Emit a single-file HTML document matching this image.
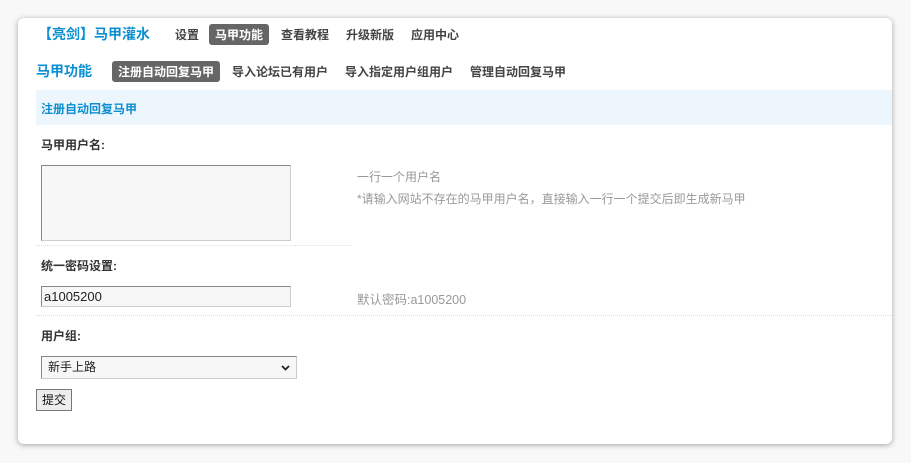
<!DOCTYPE html>
<html><head><meta charset="utf-8"><style>
body{margin:0;width:911px;height:463px;background:#f8f8f8;font-family:"Liberation Sans","Noto Sans CJK SC",sans-serif;position:relative;overflow:hidden}
.card{position:absolute;left:18px;top:18px;width:874px;height:426px;background:#fff;border-radius:6px;box-shadow:0 1px 6px rgba(0,0,0,.35)}
.a{position:absolute;white-space:nowrap}
.b{font-weight:bold}
.nav{font-size:12px;font-weight:bold;color:#444}
.pill{background:#666;color:#fff;border-radius:3px;padding:2px 6px}
.lbl{font-size:12px;font-weight:bold;color:#333}
.g{font-size:12px;color:#999}
</style></head><body>
<div class="card"></div>
<div class="a b" style="left:38px;top:24px;font-size:14px;color:#0c8fd0">【亮剑】马甲灌水</div>
<div class="a nav" style="left:175px;top:26px">设置</div>
<div class="a nav pill" style="left:209px;top:24px">马甲功能</div>
<div class="a nav" style="left:281px;top:26px">查看教程</div>
<div class="a nav" style="left:346px;top:26px">升级新版</div>
<div class="a nav" style="left:411px;top:26px">应用中心</div>
<div class="a b" style="left:36px;top:61px;font-size:14px;color:#0c8fd0">马甲功能</div>
<div class="a nav pill" style="left:112px;top:61px">注册自动回复马甲</div>
<div class="a nav" style="left:232px;top:63px">导入论坛已有用户</div>
<div class="a nav" style="left:345px;top:63px">导入指定用户组用户</div>
<div class="a nav" style="left:470px;top:63px">管理自动回复马甲</div>
<div class="a" style="left:36px;top:90px;width:856px;height:35px;background:#eef6fd"></div>
<div class="a b" style="left:41px;top:100px;font-size:12px;color:#0c8fd0">注册自动回复马甲</div>
<div class="a lbl" style="left:41px;top:136px">马甲用户名:</div>
<div class="a" style="left:41px;top:165px;width:248px;height:74px;border:1px solid #888;border-bottom-color:#ccc;border-right-color:#ccc;background:#f7f7f7"></div>
<div class="a g" style="left:357px;top:168px">一行一个用户名</div>
<div class="a g" style="left:357px;top:190px">*请输入网站不存在的马甲用户名，直接输入一行一个提交后即生成新马甲</div>
<div class="a" style="left:36px;top:245px;width:316px;border-top:1px dotted #ddd"></div>
<div class="a lbl" style="left:41px;top:257px">统一密码设置:</div>
<div class="a" style="left:41px;top:286px;border:1px solid #888;border-bottom-color:#ccc;border-right-color:#ccc;background:#f7f7f7;font-size:13px;line-height:19px;color:#222;padding-left:2px;box-sizing:border-box;width:250px;height:21px">a1005200</div>
<div class="a g" style="left:357px;top:289px;font-size:12.5px">默认密码:a1005200</div>
<div class="a" style="left:36px;top:315px;width:856px;border-top:1px dotted #ddd"></div>
<div class="a lbl" style="left:41px;top:327px">用户组:</div>
<div class="a" style="left:41px;top:356px;width:256px;height:23px;box-sizing:border-box;border:1px solid #888;border-bottom-color:#ccc;border-right-color:#ccc;background:#f7f7f7;font-size:12px;line-height:21px;color:#222;padding-left:6px">新手上路<svg style="position:absolute;right:6px;top:8px" width="9" height="6" viewBox="0 0 9 6"><path d="M1 1l3.5 3.5L8 1" stroke="#222" stroke-width="1.8" fill="none"/></svg></div>
<div class="a" style="left:36px;top:389px;width:36px;height:22px;box-sizing:border-box;border:1px solid #777;background:#eee;font-size:12px;line-height:20px;text-align:center;color:#111">提交</div>
</body></html>
